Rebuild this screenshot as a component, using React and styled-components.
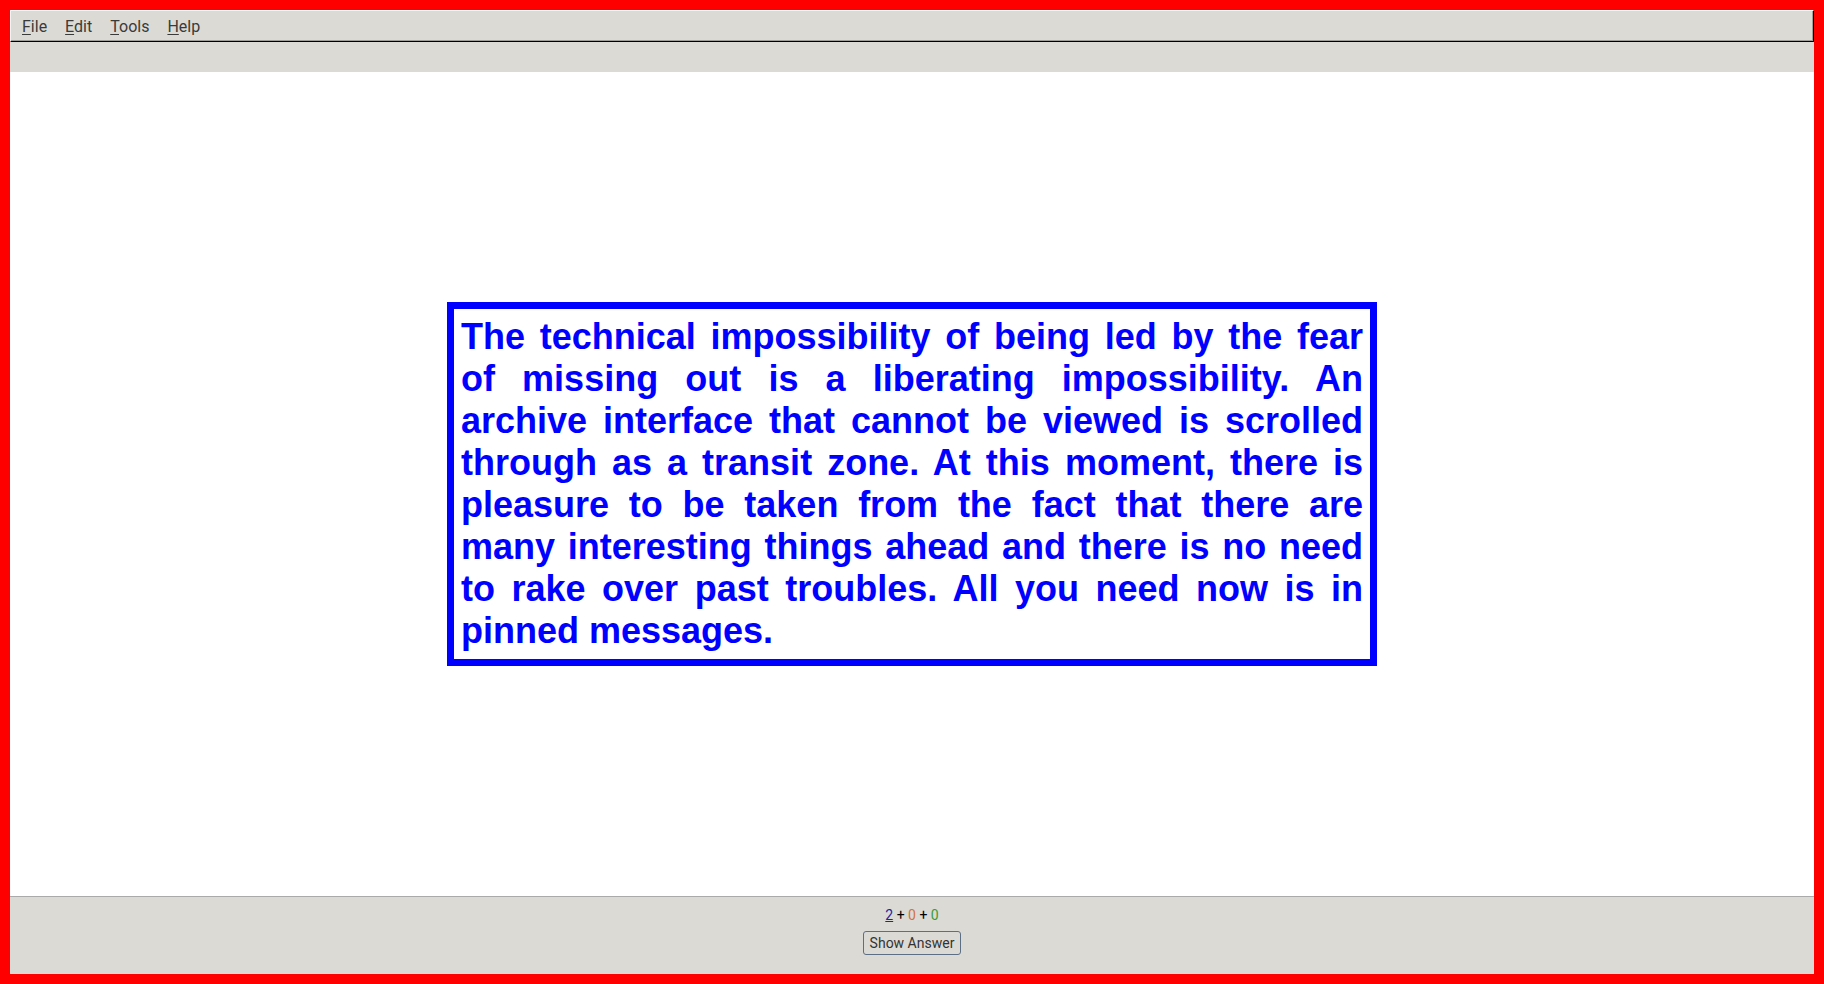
import React from 'react';
import styled, { createGlobalStyle } from 'styled-components';

const GlobalStyle = createGlobalStyle`
  html, body {
    margin: 0;
    padding: 0;
    background: #ff0000;
  }
  * {
    box-sizing: border-box;
  }
`;

const MENU = [
  { key: 'F', rest: 'ile' },
  { key: 'E', rest: 'dit' },
  { key: 'T', rest: 'ools' },
  { key: 'H', rest: 'elp' },
];

const CARD_TEXT =
  'The technical impossibility of being led by the fear of missing out is a liberating impossibility. An archive interface that cannot be viewed is scrolled through as a transit zone. At this moment, there is pleasure to be taken from the fact that there are many interesting things ahead and there is no need to rake over past troubles. All you need now is in pinned messages.';

const Window = styled.div`
  border: 10px solid #ff0000;
  display: flex;
  flex-direction: column;
  font-family: Roboto, 'Liberation Sans', sans-serif;
  height: 100vh;
  width: 100vw;
`;

const MenuBar = styled.div`
  align-items: center;
  background: #dcdad5;
  border-bottom: 1px solid #000;
  border-left: 1px solid #fff;
  border-right: 1px solid #000;
  border-top: 1px solid #fff;
  box-shadow: inset 0 -1px 0 #a09e99, inset -1px 0 0 #a09e99;
  display: flex;
  flex: 0 0 32px;
  padding: 0 2px;
`;

const MenuItem = styled.div`
  color: #3a3a3a;
  font-size: 16px;
  padding: 0 9px;
`;

const Mnemonic = styled.span`
  text-decoration: underline;
  text-underline-offset: 2px;
`;

const ToolBar = styled.div`
  background: #dcdad5;
  flex: 0 0 30px;
`;

const Main = styled.div`
  align-items: center;
  background: #fff;
  display: flex;
  flex: 1;
  justify-content: center;
`;

const Card = styled.div`
  border: 7px solid #0000ff;
  color: #0000ff;
  font-family: 'Liberation Sans', Arial, sans-serif;
  font-size: 36px;
  font-weight: bold;
  line-height: 42px;
  padding: 7px;
  text-align: justify;
  width: 930px;
`;

const BottomBar = styled.div`
  align-items: center;
  background: #dcdad5;
  border-top: 1px solid #aaa;
  display: flex;
  flex: 0 0 78px;
  flex-direction: column;
  gap: 8px;
  padding-top: 10px;
`;

const Counts = styled.div`
  color: #000;
  font-size: 14px;
  line-height: 16px;
`;

const Count = styled.span`
  color: ${props => props.color};
  text-decoration: ${props => (props.current ? 'underline' : 'none')};
`;

const Button = styled.button`
  background: #dcdad5;
  border: 1px solid #5d6f84;
  border-radius: 3px;
  color: #333;
  font-family: Roboto, 'Liberation Sans', sans-serif;
  font-size: 14px;
  height: 24px;
  padding: 0 6px;
`;

const App = () => (
  <Window>
    <GlobalStyle />
    <MenuBar>
      {MENU.map(item => (
        <MenuItem key={item.key}>
          <Mnemonic>{item.key}</Mnemonic>
          {item.rest}
        </MenuItem>
      ))}
    </MenuBar>
    <ToolBar />
    <Main>
      <Card>{CARD_TEXT}</Card>
    </Main>
    <BottomBar>
      <Counts>
        <Count color="#2323a0" current>2</Count>
        {' + '}
        <Count color="#cf7440">0</Count>
        {' + '}
        <Count color="#3a9a3a">0</Count>
      </Counts>
      <Button>Show Answer</Button>
    </BottomBar>
  </Window>
);

export default App;
